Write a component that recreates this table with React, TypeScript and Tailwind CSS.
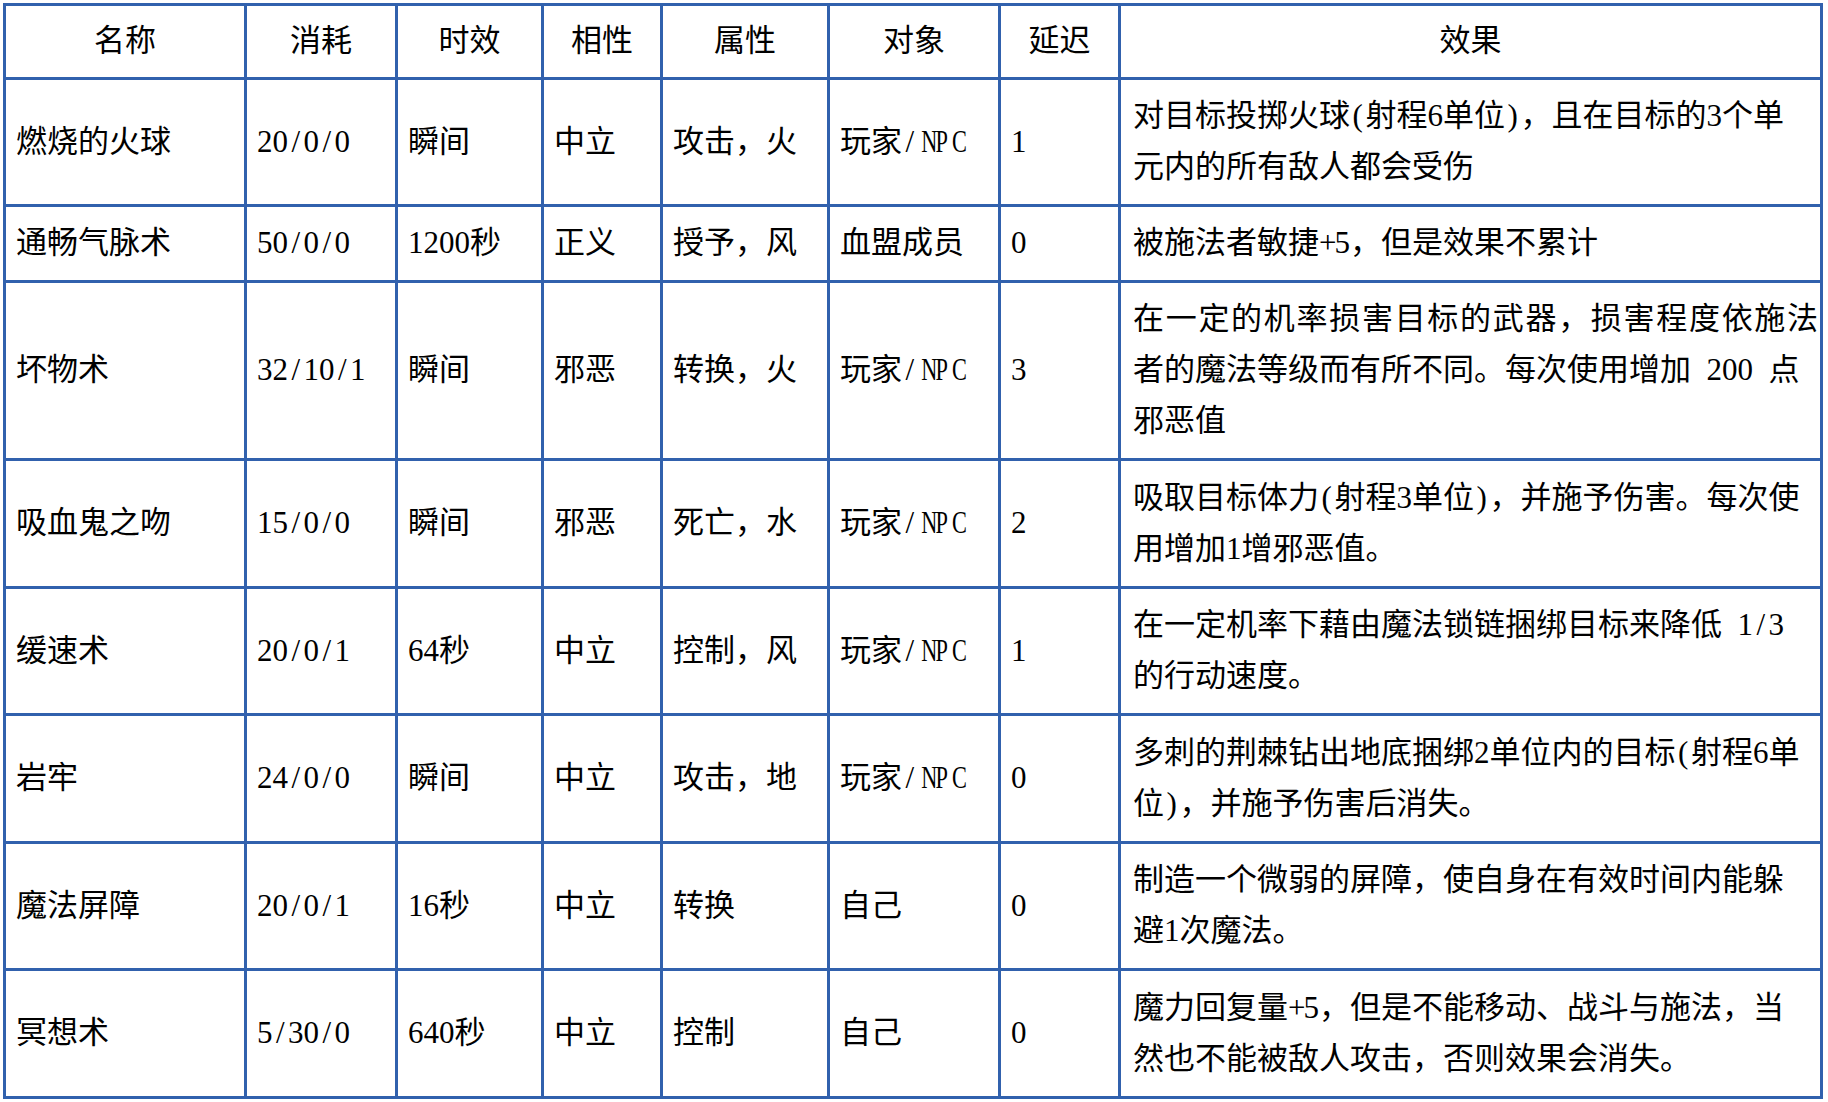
const headers = ["名称", "消耗", "时效", "相性", "属性", "对象", "延迟", "效果"];

type Spell = { cols: string[]; effect: string[]; spread?: boolean };

const spells: Spell[] = [
  { cols: ["燃烧的火球", "20/0/0", "瞬间", "中立", "攻击，火", "玩家/NPC", "1"], effect: ["对目标投掷火球(射程6单位)，且在目标的3个单", "元内的所有敌人都会受伤"] },
  { cols: ["通畅气脉术", "50/0/0", "1200秒", "正义", "授予，风", "血盟成员", "0"], effect: ["被施法者敏捷+5，但是效果不累计"] },
  { cols: ["坏物术", "32/10/1", "瞬间", "邪恶", "转换，火", "玩家/NPC", "3"], effect: ["在一定的机率损害目标的武器，损害程度依施法", "者的魔法等级而有所不同。每次使用增加 200 点", "邪恶值"], spread: true },
  { cols: ["吸血鬼之吻", "15/0/0", "瞬间", "邪恶", "死亡，水", "玩家/NPC", "2"], effect: ["吸取目标体力(射程3单位)，并施予伤害。每次使", "用增加1增邪恶值。"] },
  { cols: ["缓速术", "20/0/1", "64秒", "中立", "控制，风", "玩家/NPC", "1"], effect: ["在一定机率下藉由魔法锁链捆绑目标来降低 1/3", "的行动速度。"] },
  { cols: ["岩牢", "24/0/0", "瞬间", "中立", "攻击，地", "玩家/NPC", "0"], effect: ["多刺的荆棘钻出地底捆绑2单位内的目标(射程6单", "位)，并施予伤害后消失。"] },
  { cols: ["魔法屏障", "20/0/1", "16秒", "中立", "转换", "自己", "0"], effect: ["制造一个微弱的屏障，使自身在有效时间内能躲", "避1次魔法。"] },
  { cols: ["冥想术", "5/30/0", "640秒", "中立", "控制", "自己", "0"], effect: ["魔力回复量+5，但是不能移动、战斗与施法，当", "然也不能被敌人攻击，否则效果会消失。"] },
];

// half-width latin, like the song-style font in the source document
function Txt({ text }: { text: string }) {
  return (
    <>
      {Array.from(text).map((c, i) =>
        c.charCodeAt(0) < 128 ? (
          <span key={i} className="inline-block w-[0.5em] text-center">
            {/[A-Z]/.test(c) ? <span className="inline-block scale-x-[0.72]">{c}</span> : c}
          </span>
        ) : (
          c
        )
      )}
    </>
  );
}

const cell = "border-r-[3px] border-b-[3px] border-[#3161ad] flex items-center pb-[2px] text-[31px] leading-[51px] text-black";

export default function App() {
  return (
    <div className="min-h-screen bg-white pt-[3px] pl-[3px]">
      <div
        className="grid w-max grid-cols-[241px_151px_146px_119px_167px_171px_120px_702px] grid-rows-[74px_127px_76px_178px_128px_127px_128px_127px_128px] border-l-[3px] border-t-[3px] border-[#3161ad]"
        style={{ fontFamily: '"Liberation Serif", "Noto Sans CJK SC", serif' }}
      >
        {headers.map((h) => (
          <div key={h} className={`${cell} justify-center`}>
            {h}
          </div>
        ))}
        {spells.map((s) => (
          <>
            {s.cols.map((v, i) => (
              <div key={s.cols[0] + i} className={`${cell} pl-[10px] pr-[4px] whitespace-nowrap`}>
                <span>
                  <Txt text={v} />
                </span>
              </div>
            ))}
            <div key={s.cols[0] + "fx"} className={`${cell} pl-[12px] pr-[2px]`}>
              <div className="w-full">
                {s.effect.map((line, j) => (
                  <div
                    key={j}
                    className={
                      s.spread && j === 0
                        ? "whitespace-nowrap text-justify [text-align-last:justify]"
                        : "whitespace-nowrap"
                    }
                  >
                    <Txt text={line} />
                  </div>
                ))}
              </div>
            </div>
          </>
        ))}
      </div>
    </div>
  );
}
